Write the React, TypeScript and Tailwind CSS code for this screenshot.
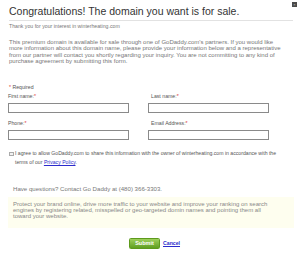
import React from 'react';

function Label({ text }: { text: string }) {
  return (
    <div className="text-[5.2px] leading-[6px] text-[#555]">
      {text}
      <span className="text-[#d33]">*</span>
    </div>
  );
}

function Field({ label, offset }: { label: string; offset?: boolean }) {
  return (
    <div className="flex flex-col">
      <div className={offset ? 'pl-[3px]' : ''}>
        <Label text={label} />
      </div>
      <div className="mt-[4.5px] h-[10px] border border-[#8a8a8a] bg-white" />
    </div>
  );
}

export default function App() {
  return (
    <div className="relative w-[300px] h-[257px] overflow-hidden bg-white font-['Liberation_Sans',Arial,sans-serif] text-[#777]">
      <button className="absolute right-[3px] top-[2px] flex h-[5px] w-[5px] items-center justify-center bg-[#4a4a4a]">
        <span className="text-[4px] leading-none text-[#ccc]">×</span>
      </button>

      <div className="pl-[9px] pr-[7px] pt-[5px]">
        <h1 className="text-[10.5px] leading-[13px] text-[#333]">
          Congratulations! The domain you want is for sale.
        </h1>
        <div className="mt-[2px] h-px bg-[#e2e2e2]" />

        <p className="mt-[1.5px] text-[5.2px] leading-[6.4px]">
          Thank you for your interest in winterheating.com
        </p>
        <p className="mt-[10px] whitespace-nowrap text-[6px] leading-[6.4px]">
          This premium domain is available for sale through one of GoDaddy.com's partners. If you would like
          <br />
          more information about this domain name, please provide your information below and a representative
          <br />
          from our partner will contact you shortly regarding your inquiry. You are not committing to any kind of
          <br />
          purchase agreement by submitting this form.
        </p>

        <div className="mt-[19px] text-[5.2px] leading-[6px] text-[#555]">
          <span className="text-[#d33]">*</span> Required
        </div>

        <div className="mt-[3px] -ml-[1px] grid w-[261px] grid-cols-[121px_121px] gap-x-[19px] gap-y-[6.5px]">
          <Field label="First name:" />
          <Field label="Last name:" offset />
          <Field label="Phone:" />
          <Field label="Email Address:" offset />
        </div>

        <div className="mt-[9px] flex items-start gap-[1.5px] text-[5.15px] leading-[9px] text-[#555]">
          <span className="mt-[2.5px] h-[4.5px] w-[4.5px] shrink-0 border border-[#aaa] bg-[#f2f2f2]" />
          <span className="whitespace-nowrap">
            I agree to allow GoDaddy.com to share this information with the owner of winterheating.com in accordance
            with the
            <br />
            terms of our{' '}
            <a href="#" className="text-[#2b2bcc] underline">
              Privacy Policy
            </a>
            .
          </span>
        </div>

        <p className="mt-[18px] pl-[4px] text-[6.1px] leading-[7px] text-[#777]">
          Have questions? Contact Go Daddy at (480) 366-3303.
        </p>

        <div className="mt-[5px] -ml-[1px] mr-[-1px] whitespace-nowrap bg-[#fefeef] pb-[9px] pl-[5px] pr-[10px] pt-[5px] text-[6px] leading-[5.8px] text-[#888]">
          Protect your brand online, drive more traffic to your website and improve your ranking on search
          <br />
          engines by registering related, misspelled or geo-targeted domin names and pointing them all
          <br />
          toward your website.
        </div>

        <div className="mt-[10px] flex items-center gap-[3px] pl-[120px]">
          <button className="h-[11px] w-[31px] rounded-[1.5px] border border-[#5d9a1c] bg-gradient-to-b from-[#9ed05a] to-[#5f9f1f] text-[5.5px] font-bold leading-none text-white">
            Submit
          </button>
          <a href="#" className="text-[5.2px] font-bold text-[#2b2bcc] underline">
            Cancel
          </a>
        </div>
      </div>
    </div>
  );
}
